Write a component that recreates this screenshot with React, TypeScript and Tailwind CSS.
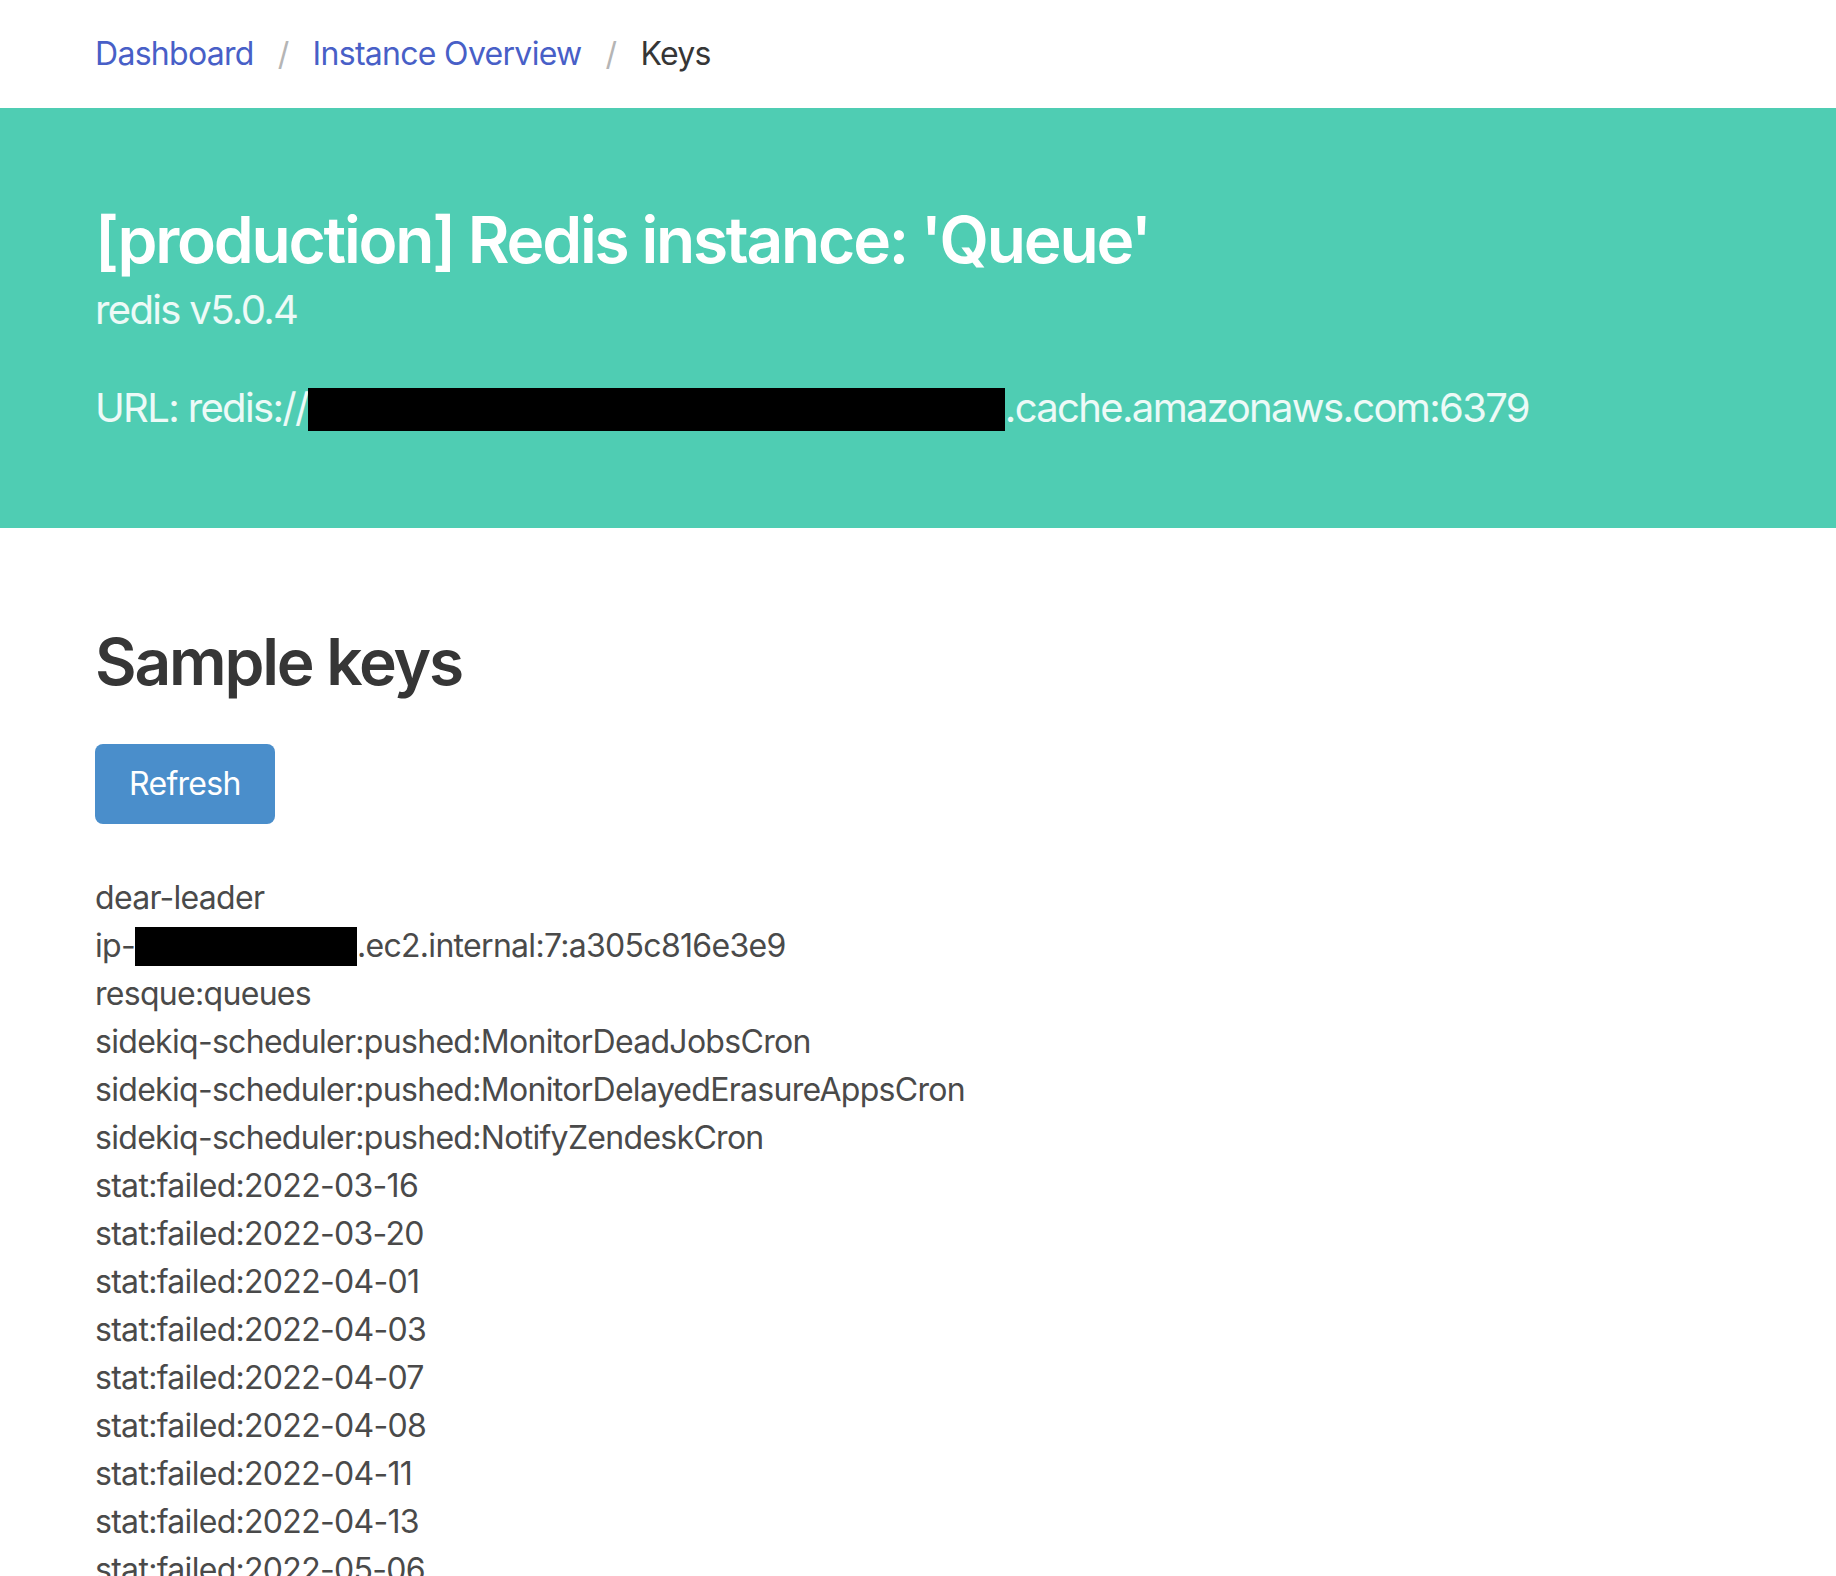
import React from 'react'

const keys = [
  'dear-leader',
  'ip-REDACTED',
  'resque:queues',
  'sidekiq-scheduler:pushed:MonitorDeadJobsCron',
  'sidekiq-scheduler:pushed:MonitorDelayedErasureAppsCron',
  'sidekiq-scheduler:pushed:NotifyZendeskCron',
  'stat:failed:2022-03-16',
  'stat:failed:2022-03-20',
  'stat:failed:2022-04-01',
  'stat:failed:2022-04-03',
  'stat:failed:2022-04-07',
  'stat:failed:2022-04-08',
  'stat:failed:2022-04-11',
  'stat:failed:2022-04-13',
  'stat:failed:2022-05-06',
]

function Redacted({ className }: { className: string }) {
  return <span className={`inline-block bg-black align-middle ${className}`} />
}

export default function App() {
  return (
    <div className="min-h-screen bg-white font-['Inter',sans-serif] text-[32px] leading-[1.5] tracking-[-0.7px] text-[#4a4a4a]">
      <nav className="flex h-[108px] items-center px-[95px]">
        <ul className="flex items-center">
          <li>
            <a href="#" className="pr-[24px] text-[#485fc7]">Dashboard</a>
          </li>
          <li className="flex items-center">
            <span className="text-[#b5b5b5]">/</span>
            <a href="#" className="px-[24px] text-[#485fc7]">Instance Overview</a>
          </li>
          <li className="flex items-center">
            <span className="text-[#b5b5b5]">/</span>
            <span className="px-[24px] text-[#363636]">Keys</span>
          </li>
        </ul>
      </nav>

      <section className="bg-[#4fcdb3] px-[95px] pt-[96px] pb-[95px] text-white">
        <h1 className="text-[64px] font-semibold leading-[1.125] tracking-[-2.2px]">[production] Redis instance: 'Queue'</h1>
        <p className="mt-[9px] mb-[48px] text-[40px] leading-[1.25] tracking-[-1.65px] text-white/90">redis v5.0.4</p>
        <p className="flex items-center text-[40px] leading-[1.25] tracking-[-1.65px] text-white/90">
          <span>URL: redis://</span>
          <Redacted className="mt-[3px] h-[43px] w-[697px]" />
          <span>.cache.amazonaws.com:6379</span>
        </p>
      </section>

      <section className="px-[95px] pt-[98px]">
        <h2 className="mb-[46px] text-[64px] font-semibold leading-[1.125] tracking-[-2.2px] text-[#363636]">Sample keys</h2>
        <div className="mb-[50px]">
          <button className="h-[80px] rounded-[8px] bg-[#4a8ecb] px-[34px] text-[32px] text-white">Refresh</button>
        </div>
        <div>
          {keys.map(k =>
            k === 'ip-REDACTED' ? (
              <div key={k} className="flex items-center">
                <span>ip-</span>
                <Redacted className="h-[39px] w-[222px]" />
                <span>.ec2.internal:7:a305c816e3e9</span>
              </div>
            ) : (
              <div key={k}>{k}</div>
            ),
          )}
        </div>
      </section>
    </div>
  )
}
